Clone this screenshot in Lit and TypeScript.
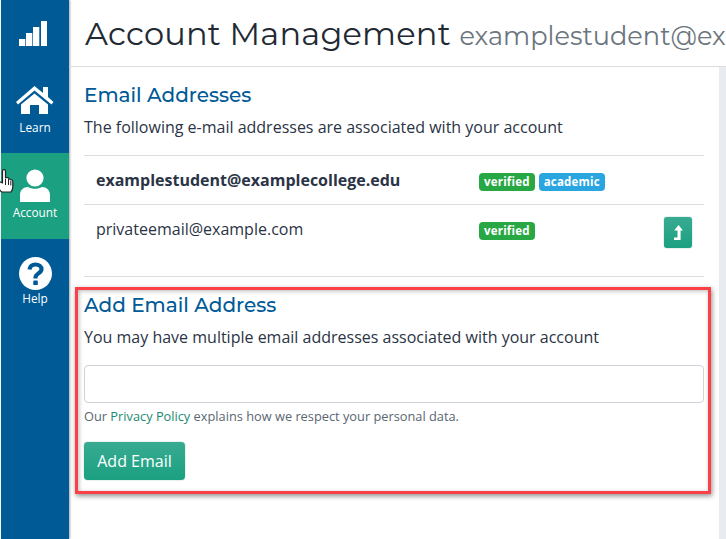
import { LitElement, html, css, svg } from "lit";
import { customElement } from "lit/decorators.js";

const bars = svg`<svg width="28" height="25" viewBox="0 0 28 25"><path fill="#fff" d="M0 18h6.300v7H0zM7 12h6.300v13H7zM14 6h6.300v19H14zM22 0h6v25h-6z"/></svg>`;
const home = svg`<svg width="38" height="28" viewBox="0 0 38 28"><path fill="#fff" d="M18.500 0 27 7V1h5v10l5.500 5-2 2.500L18.500 4.500 2 18.500 0 16z"/><path fill="#fff" d="M18.500 7.500 32 18.500V28H23V19H14V28H5V18.500z"/></svg>`;
const person = svg`<svg width="30" height="33" viewBox="0 0 30 33"><circle cx="15" cy="9" r="8.600" fill="#fff"/><path fill="#fff" d="M0 33V26C0 21 3.500 18 8 18c2 1 4.500 1.800 7 1.800S20 19 22 18c4.500 0 8 3 8 8v7z"/></svg>`;
const help = svg`<svg width="33" height="33" viewBox="0 0 33 33"><circle cx="16.500" cy="16.500" r="16.500" fill="#fff"/><path fill="none" stroke="#005a96" stroke-width="4.200" d="M10.500 12.500c.5-3.500 3-5 6-5 3.500 0 6 2 6 4.800 0 4-6 4.200-6 8.200v1"/><rect x="14.300" y="23.500" width="4.500" height="4.500" rx=".6" fill="#005a96"/></svg>`;
const hand = svg`<svg width="14" height="24" viewBox="0 0 14 24"><path fill="#fff" stroke="#222" stroke-width="1.200" stroke-linejoin="round" d="M2.500 2Q2.500 .7 4 .7 5.500 .7 5.500 2V9L7.500 8.500Q9 8.500 9 10L11 10.500Q12.800 11 12.800 12.500V18Q12.800 20.500 11 23H2Q0 22 -2 18V12L2.500 14z"/><path stroke="#222" fill="none" d="M5.500 10v6M8.500 10v6M10.800 11.500v5"/></svg>`;
const arrow = svg`<svg width="11" height="15" viewBox="0 0 11 15"><path fill="#fff" d="M5.500 0 10 5.500H7.600V15H1V12.500H4.500V5.500H1.200z"/></svg>`;

@customElement("app-root")
export class AppRoot extends LitElement {
  static styles = css`
    :host { display: block; position: relative; width: 726px; height: 539px; overflow: hidden; background: #fff; font-family: "Open Sans", sans-serif; color: #2b3445; }
    .page { display: flex; height: 539px; padding-left: 1px; box-sizing: border-box; }
    .side { width: 68px; flex: none; background: #005a96; box-shadow: 1px 0 2px #a8a8a8; display: flex; flex-direction: column; color: #fff; font-size: 11.800px; }
    .logo { height: 67px; display: flex; align-items: flex-start; justify-content: center; padding: 21px 4px 0 0; box-sizing: border-box; }
    .nav { height: 86px; display: flex; flex-direction: column; align-items: center; box-sizing: border-box; line-height: 16px; }
    .learn { padding-top: 19px; gap: 5px; }
    .account { background: #1ba082; padding-top: 16px; gap: 2px; }
    .help { padding-top: 18px; gap: 0; }
    main { flex: 1; min-width: 0; overflow: hidden; display: flex; flex-direction: column; }
    header { height: 67px; flex: none; box-sizing: border-box; border-bottom: 1px solid #ddd; padding: 13px 0 0 16px; white-space: nowrap; font-family: Montserrat, Inter, sans-serif; font-size: 32px; letter-spacing: .22px; line-height: 42px; color: #212933; overflow: hidden; }
    header small { font-size: 25.600px; letter-spacing: 0; color: #6c757d; }
    .body { flex: 1; display: flex; min-height: 0; }
    .content { flex: 1; min-width: 0; padding: 0 15px; }
    h2 { margin: 0; font: 500 20px/26px Montserrat, Inter, sans-serif; color: #005a96; }
    p { margin: 0; font-size: 16px; line-height: 24px; }
    .s1 { padding-top: 15px; }
    .s1 p { margin-top: 7px; }
    .rows { margin-top: 16px; border-top: 1px solid #ddd; }
    .row { display: flex; box-sizing: border-box; border-bottom: 1px solid #ddd; padding-left: 12px; font-size: 16px; line-height: 24px; }
    .r1 { height: 49px; padding-top: 12px; font-weight: 700; }
    .r2 { height: 72px; padding-top: 12px; }
    .addr { width: 383px; flex: none; }
    .tags { display: flex; gap: 4px; flex: 1; padding-top: 5px; align-items: flex-start; }
    .tag { height: 18px; box-sizing: border-box; border-radius: 4px; padding: 0 5px; font-size: 11.500px; font-weight: 700; line-height: 18px; color: #fff; background: #28a745; letter-spacing: .2px; }
    .tag.blue { background: #29a5e0; }
    .up { width: 28px; height: 31px; margin: 0 12px 0 0; border-radius: 3px; background: linear-gradient(#38ab91, #1ba082); border: 0; padding: 0; display: flex; align-items: center; justify-content: center; box-shadow: 0 0 1px #0d6e58; }
    .s2 { padding-top: 15px; }
    .s2 p { margin-top: 7px; }
    .input { margin-top: 16px; height: 38px; border: 1px solid #ced4da; border-radius: 4px; box-sizing: border-box; background: #fff; }
    .note { margin-top: 3px; font-size: 12.800px; line-height: 20px; color: #5a6672; }
    .note a { color: #1b8a72; text-decoration: none; }
    .btn { display: block; margin-top: 16px; width: 101px; height: 38px; border: 0; border-radius: 4px; background: linear-gradient(#38ab91, #1ba082); box-shadow: 0 0 1px #0d6e58; color: #fff; font: 16px/24px "Open Sans", sans-serif; padding: 0; }
    .strip { width: 7px; flex: none; background: #e8ecf0; }
    .callout { position: absolute; left: 75px; top: 287px; width: 636px; height: 207px; box-sizing: border-box; border: 3px solid #fb4146; box-shadow: 1px 2px 5px rgba(0,0,0,.45), inset 1px 1px 4px rgba(0,0,0,.28); pointer-events: none; }
    .cursor { position: absolute; left: 0; top: 169px; display: block; line-height: 0; }
  `;

  render() {
    return html`
      <div class="page">
        <nav class="side">
          <div class="logo">${bars}</div>
          <div class="nav learn">${home}<span>Learn</span></div>
          <div class="nav account">${person}<span>Account</span></div>
          <div class="nav help">${help}<span>Help</span></div>
        </nav>
        <main>
          <header>Account Management <small>examplestudent@examplecollege.edu</small></header>
          <div class="body">
            <div class="content">
              <section class="s1">
                <h2>Email Addresses</h2>
                <p>The following e-mail addresses are associated with your account</p>
                <div class="rows">
                  <div class="row r1">
                    <div class="addr">examplestudent@examplecollege.edu</div>
                    <div class="tags"><span class="tag">verified</span><span class="tag blue">academic</span></div>
                  </div>
                  <div class="row r2">
                    <div class="addr">privateemail@example.com</div>
                    <div class="tags"><span class="tag">verified</span></div>
                    <button class="up" aria-label="Make primary">${arrow}</button>
                  </div>
                </div>
              </section>
              <section class="s2">
                <h2>Add Email Address</h2>
                <p>You may have multiple email addresses associated with your account</p>
                <div class="input"></div>
                <div class="note">Our <a href="#">Privacy Policy</a> explains how we respect your personal data.</div>
                <button class="btn">Add Email</button>
              </section>
            </div>
            <div class="strip"></div>
          </div>
        </main>
      </div>
      <div class="callout"></div>
      <div class="cursor">${hand}</div>
    `;
  }
}
